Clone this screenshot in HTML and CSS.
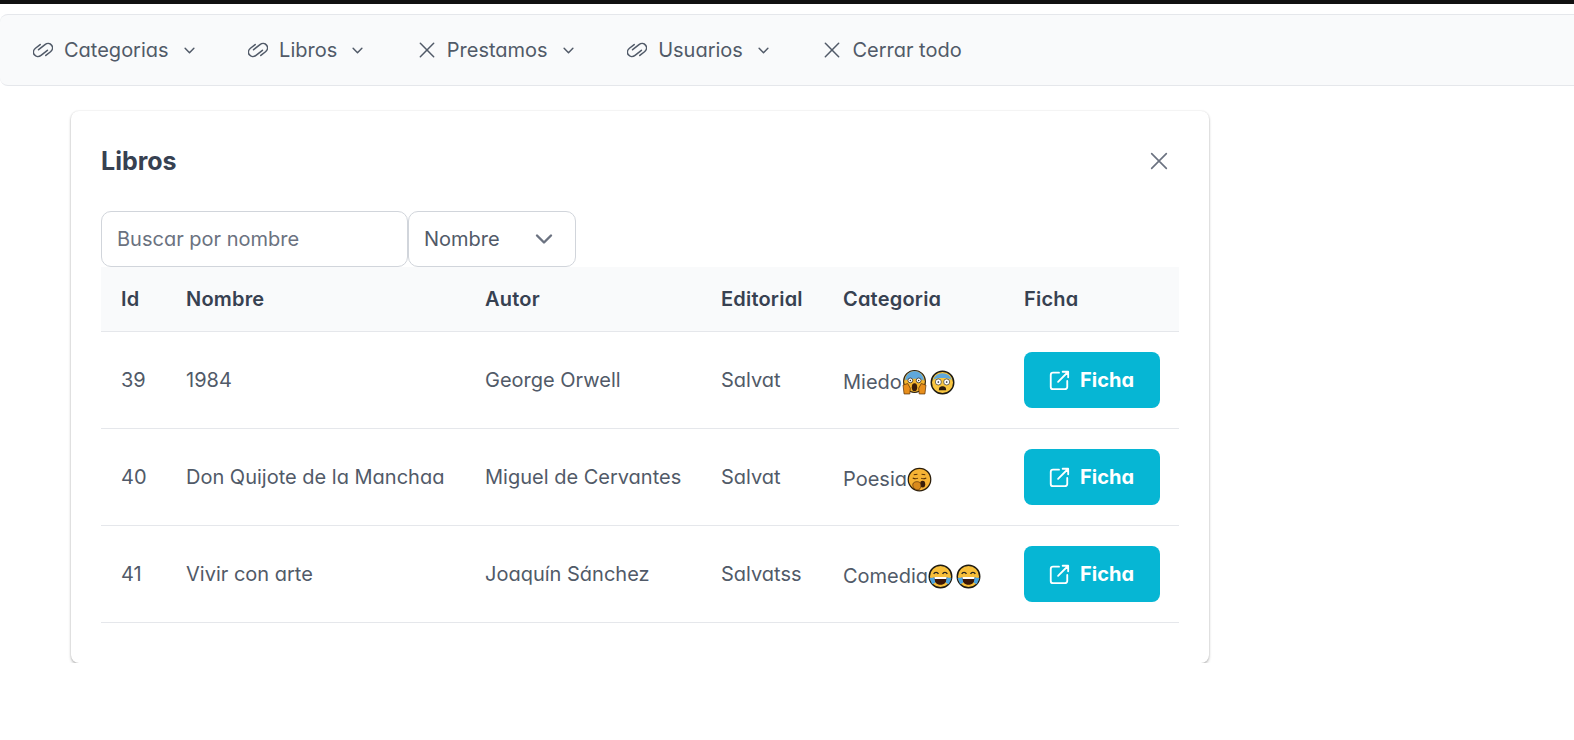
FILE: index.html
```html
<!DOCTYPE html>
<html lang="es">
<head>
    <meta charset="UTF-8">
    <meta name="viewport" content="width=device-width, initial-scale=1.0">
    <title>Libros</title>
    <link rel="stylesheet" href="styles.css">
</head>
<body>
    <svg class="icon-defs" aria-hidden="true">
        <symbol id="i-link" viewBox="0 0 24 24" overflow="visible" fill="none" stroke="currentColor" stroke-width="1.500" stroke-linecap="round" stroke-linejoin="round">
            <g transform="translate(12 12) rotate(-38) scale(1.300 1.200) translate(-12 -12)">
                <path d="M15 15H7.500a4.500 4.500 0 0 1 0-9H13"/>
                <path d="M9 9H16.500a4.500 4.500 0 0 1 0 9H11"/>
            </g>
        </symbol>
        <symbol id="i-x" viewBox="0 0 24 24" fill="none" stroke="currentColor" stroke-width="1.800" stroke-linecap="round">
            <path d="M4 4 20 20M20 4 4 20"/>
        </symbol>
        <symbol id="i-chevron" viewBox="0 0 24 24" fill="none" stroke="currentColor" stroke-width="2.400" stroke-linecap="round" stroke-linejoin="round">
            <path d="M5 8.500 12 15.500 19 8.500"/>
        </symbol>
        <symbol id="i-open" viewBox="0 0 24 24" fill="none" stroke="currentColor" stroke-width="2" stroke-linecap="round" stroke-linejoin="round">
            <path d="M12 4H5.500A2.500 2.500 0 0 0 3 6.500V19.500A2.500 2.500 0 0 0 5.500 22H18.500A2.500 2.500 0 0 0 21 19.500V13M11 14 22 3M22 3H16M22 3V9"/>
        </symbol>
        <symbol id="e-scream" viewBox="0 0 24 24">
            <circle cx="12" cy="11" r="10.500" fill="#f5b52e" stroke="#2a2113"/>
            <path d="M3 10a9 9 0 0 1 18 0c-3-2-15-2-18 0z" fill="#5fa8dc"/>
            <circle cx="8" cy="10" r="2.300" fill="#fff" stroke="#222" stroke-width=".7"/>
            <circle cx="16" cy="10" r="2.300" fill="#fff" stroke="#222" stroke-width=".7"/>
            <circle cx="8" cy="10" r=".7" fill="#222"/>
            <circle cx="16" cy="10" r=".7" fill="#222"/>
            <ellipse cx="12" cy="16.500" rx="2.600" ry="3.800" fill="#3a1d0a"/>
            <path d="M1 14.500 5.500 13 8 17.500 7.500 23H2zM23 14.500 18.500 13 16 17.500 16.500 23H22z" fill="#e88f1c" stroke="#5a3208" stroke-width=".7"/>
        </symbol>
        <symbol id="e-fear" viewBox="0 0 24 24">
            <circle cx="12" cy="12" r="10.800" fill="#f9c640" stroke="#1d1a12" stroke-width="1.400"/>
            <path d="M3 9.500a9.500 9.500 0 0 1 18 0c-3-2.500-15-2.500-18 0z" fill="#5fa8dc"/>
            <circle cx="8" cy="11.500" r="2.900" fill="#fff" stroke="#222" stroke-width=".6"/>
            <circle cx="16" cy="11.500" r="2.900" fill="#fff" stroke="#222" stroke-width=".6"/>
            <circle cx="8" cy="11.500" r=".8" fill="#222"/>
            <circle cx="16" cy="11.500" r=".8" fill="#222"/>
            <path d="M8.500 19.500c0-3 1.500-3.800 3.500-3.800s3.500.8 3.500 3.800z" fill="#2b1a0c"/>
        </symbol>
        <symbol id="e-yawn" viewBox="0 0 24 24">
            <circle cx="12" cy="12" r="10.800" fill="#f7b334" stroke="#2a1d0c" stroke-width="1.200"/>
            <path d="M5.500 10.500c2 1 3.500 1 5 .2M13.500 10.700c1.500.8 3 .8 5-.2M6.500 7.500 10 7M14 7l3.500.5" fill="none" stroke="#5a3208" stroke-width="1"/>
            <ellipse cx="15" cy="16.500" rx="2.500" ry="3.200" fill="#3a1d0a"/>
            <path d="M6 15.500c2-2 6-2 7 .5s0 6-3 6-5.500-4-4-6.500z" fill="#d98a1c" stroke="#5a3208" stroke-width=".7"/>
        </symbol>
        <symbol id="e-joy" viewBox="0 0 24 24">
            <circle cx="12" cy="12" r="10.800" fill="#f7bf3a" stroke="#1d1a12" stroke-width="1.400"/>
            <path d="M5.500 9.500c1-2 3.500-2 4.500 0M14 9.500c1-2 3.500-2 4.500 0" fill="none" stroke="#222" stroke-width="1.300"/>
            <path d="M5.500 12.500h13c0 5-3 7.500-6.500 7.500s-6.500-2.500-6.500-7.500z" fill="#3a1607"/>
            <path d="M6 12.500h12l-.3 2H6.300z" fill="#fff"/>
            <path d="M1.500 13.500 6 13l1 5-3 1.500zM22.500 13.500 18 13l-1 5 3 1.500z" fill="#4aa3e0"/>
        </symbol>
    </svg>

    <div class="top-strip"></div>

    <nav class="navbar">
        <a class="nav-item">
            <svg class="nav-icon"><use href="#i-link"/></svg>
            <span>Categorias</span>
            <svg class="nav-chevron"><use href="#i-chevron"/></svg>
        </a>
        <a class="nav-item">
            <svg class="nav-icon"><use href="#i-link"/></svg>
            <span>Libros</span>
            <svg class="nav-chevron"><use href="#i-chevron"/></svg>
        </a>
        <a class="nav-item">
            <svg class="nav-icon nav-icon-x"><use href="#i-x"/></svg>
            <span>Prestamos</span>
            <svg class="nav-chevron"><use href="#i-chevron"/></svg>
        </a>
        <a class="nav-item">
            <svg class="nav-icon"><use href="#i-link"/></svg>
            <span>Usuarios</span>
            <svg class="nav-chevron"><use href="#i-chevron"/></svg>
        </a>
        <a class="nav-item">
            <svg class="nav-icon nav-icon-x"><use href="#i-x"/></svg>
            <span>Cerrar todo</span>
        </a>
    </nav>

    <main class="card">
        <div class="card-header">
            <h2>Libros</h2>
            <button class="close-btn" aria-label="Cerrar"><svg><use href="#i-x"/></svg></button>
        </div>

        <div class="filters">
            <div class="search-input">Buscar por nombre</div>
            <div class="filter-select">
                <span>Nombre</span>
                <svg><use href="#i-chevron"/></svg>
            </div>
        </div>

        <table class="books">
            <colgroup>
                <col class="col-id">
                <col class="col-name">
                <col class="col-author">
                <col class="col-publisher">
                <col class="col-category">
                <col class="col-action">
            </colgroup>
            <thead>
                <tr>
                    <th>Id</th>
                    <th>Nombre</th>
                    <th>Autor</th>
                    <th>Editorial</th>
                    <th>Categoria</th>
                    <th>Ficha</th>
                </tr>
            </thead>
            <tbody>
                <tr>
                    <td>39</td>
                    <td>1984</td>
                    <td>George Orwell</td>
                    <td>Salvat</td>
                    <td><span class="category">Miedo<svg class="emoji"><use href="#e-scream"/></svg><svg class="emoji"><use href="#e-fear"/></svg></span></td>
                    <td><button class="ficha-btn"><svg><use href="#i-open"/></svg>Ficha</button></td>
                </tr>
                <tr>
                    <td>40</td>
                    <td>Don Quijote de la Manchaa</td>
                    <td>Miguel de Cervantes</td>
                    <td>Salvat</td>
                    <td><span class="category">Poesia<svg class="emoji"><use href="#e-yawn"/></svg></span></td>
                    <td><button class="ficha-btn"><svg><use href="#i-open"/></svg>Ficha</button></td>
                </tr>
                <tr>
                    <td>41</td>
                    <td>Vivir con arte</td>
                    <td>Joaquín Sánchez</td>
                    <td>Salvatss</td>
                    <td><span class="category">Comedia<svg class="emoji"><use href="#e-joy"/></svg><svg class="emoji"><use href="#e-joy"/></svg></span></td>
                    <td><button class="ficha-btn"><svg><use href="#i-open"/></svg>Ficha</button></td>
                </tr>
            </tbody>
        </table>
    </main>
</body>
</html>
```

FILE: styles.css
```css
body {
    font-family: Inter, "Noto Sans", sans-serif;
    font-size: 20px;
    font-feature-settings: "cv11";
    color: #515a68;
    background: white;
    margin: 0;
    overflow: hidden;
}
.icon-defs {
    display: none;
}
.top-strip {
    height: 4px;
    background: #111;
    margin-bottom: 10px;
}
.navbar {
    display: flex;
    align-items: center;
    gap: 51.5px;
    height: 70px;
    padding-left: 33px;
    background: #f9fafb;
    border-top: 1px solid #e5e7eb;
    border-bottom: 1px solid #e5e7eb;
    border-radius: 8px 0 0 8px;
}
.nav-item {
    display: flex;
    align-items: center;
}
.nav-icon {
    width: 20px;
    height: 20px;
    margin-right: 11px;
}
.nav-icon-x {
    margin-right: 10px;
}
.nav-chevron {
    width: 15px;
    height: 15px;
    margin-left: 13px;
}
.card {
    width: 1078px;
    margin: 25px 0 0 71px;
    padding: 30px 30px 40px;
    background: white;
    border-radius: 8px;
    box-shadow: 0 0 2px rgba(0,0,0,0.14), 0 2px 3px rgba(0,0,0,0.25);
}
.card-header {
    display: flex;
    justify-content: space-between;
    align-items: center;
    height: 40px;
    margin-bottom: 30px;
}
.card-header h2 {
    margin: 0;
    font-size: 25px;
    font-weight: 700;
    color: #374151;
}
.close-btn {
    display: flex;
    margin-right: 9px;
    padding: 0;
    border: none;
    background: none;
    color: #6b7280;
}
.close-btn svg {
    width: 22px;
    height: 22px;
}
.filters {
    display: flex;
}
.search-input, .filter-select {
    box-sizing: border-box;
    display: flex;
    align-items: center;
    height: 56px;
    background: white;
    border: 1px solid #d1d5db;
    border-radius: 10px;
}
.search-input {
    width: 307px;
    padding-left: 15px;
    color: #6b7280;
}
.filter-select {
    width: 168px;
    padding-left: 15px;
    justify-content: space-between;
    padding-right: 19px;
}
.filter-select svg {
    width: 24px;
    height: 24px;
    color: #6b7280;
}
.books {
    width: 1078px;
    table-layout: fixed;
    border-collapse: collapse;
}
.col-id { width: 65px; }
.col-name { width: 299px; }
.col-author { width: 236px; }
.col-publisher { width: 122px; }
.col-category { width: 181px; }
.col-action { width: 175px; }
.books th {
    height: 64px;
    padding: 0 19px 0 20px;
    text-align: left;
    font-weight: 600;
    letter-spacing: 0.2px;
    color: #374151;
    background: #f9fafb;
    border-bottom: 1px solid #e5e7eb;
}
.books td {
    height: 56px;
    padding: 20px;
    border-bottom: 1px solid #e5e7eb;
    white-space: nowrap;
}
.category {
    display: inline-flex;
    align-items: center;
    position: relative;
    top: 2px;
}
.emoji {
    width: 25px;
    height: 25px;
    margin-right: 3px;
}
.ficha-btn {
    display: flex;
    align-items: center;
    justify-content: center;
    gap: 10px;
    width: 136px;
    height: 56px;
    padding: 0 2px 0 0;
    border: none;
    border-radius: 8px;
    background: #06b6d4;
    color: white;
    font-family: inherit;
    font-feature-settings: inherit;
    font-size: 20px;
    font-weight: 700;
}
.ficha-btn svg {
    width: 22px;
    height: 22px;
}
```
